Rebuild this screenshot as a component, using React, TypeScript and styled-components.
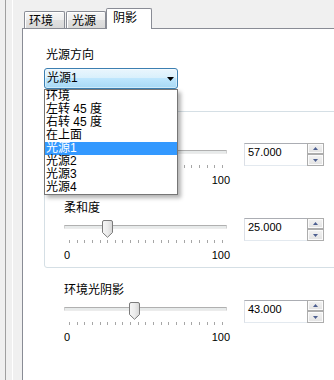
import React from "react";
import styled, { createGlobalStyle } from "styled-components";

const GlobalStyle = createGlobalStyle`
  html, body { margin: 0; padding: 0; background: #f0f0f0; }
  body {
    font-family: "Liberation Sans", "Noto Sans CJK SC", sans-serif;
    font-size: 12px;
    color: #000;
  }
  * { box-sizing: border-box; }
`;

const Page = styled.div`
  width: 334px;
  height: 380px;
  overflow: hidden;
  display: flex;
  padding-left: 5px;
  background: #f0f0f0;
`;

const OuterFrame = styled.div`
  flex: 1;
  display: flex;
  border-left: 1px solid #a0a0a0;
  padding-left: 6px;
  min-width: 0;
`;

const InnerFrame = styled.div`
  flex: 1;
  display: flex;
  flex-direction: column;
  border-left: 1px solid #ffffff;
  padding-left: 9px;
  min-width: 0;
`;

const TabBar = styled.div`
  height: 28px;
  flex: none;
  display: flex;
  align-items: flex-end;
  padding-left: 2px;
  position: relative;
  z-index: 1;
`;

const Tab = styled.div<{ $active?: boolean; $w: number; $pad: number; $gap?: number }>`
  width: ${(p) => p.$w}px;
  height: ${(p) => (p.$active ? 21 : 17)}px;
  margin-left: ${(p) => p.$gap ?? 0}px;
  margin-bottom: ${(p) => (p.$active ? -1 : 0)}px;
  padding: 2px 0 0 ${(p) => p.$pad}px;
  line-height: 14px;
  border: 1px solid #898c95;
  border-bottom: none;
  border-radius: 2px 2px 0 0;
  white-space: nowrap;
  background: ${(p) =>
    p.$active
      ? "#ffffff"
      : "linear-gradient(#f7f7f7 0%, #ededed 50%, #e1e1e1 51%, #d9d9d9 100%)"};
  box-shadow: ${(p) => (p.$active ? "none" : "inset 1px 1px 0 #ffffff")};
`;

const Panel = styled.div`
  flex: 1;
  background: #ffffff;
  border-top: 1px solid #898c95;
  border-left: 1px solid #898c95;
  margin-right: -30px;
  padding: 19px 0 0 21px;
  display: flex;
  flex-direction: column;
  align-items: flex-start;
`;

const SectionLabel = styled.div`
  line-height: 14px;
  padding-left: 2px;
  white-space: nowrap;
`;

const ComboWrap = styled.div`
  position: relative;
  margin-top: 6px;
  width: 134px;
  z-index: 5;
`;

const Combo = styled.div`
  height: 21px;
  border: 1px solid #3c7fb1;
  border-radius: 3px;
  background: linear-gradient(#eaf6fd 0%, #d9f0fc 47%, #bee6fd 50%, #a7d9f5 100%);
  box-shadow: inset 0 0 0 1px rgba(255, 255, 255, 0.45);
  display: flex;
  align-items: center;
  padding: 0 3px 0 2px;
  line-height: 19px;
`;

const ComboText = styled.span`
  flex: 1;
  white-space: nowrap;
`;

const ComboArrow = styled.svg`
  display: block;
  flex: none;
`;

const DropList = styled.div`
  position: absolute;
  top: 21px;
  left: 0;
  width: 134px;
  background: #ffffff;
  border: 1px solid #767676;
  box-shadow: 3px 3px 4px rgba(0, 0, 0, 0.3);
`;

const DropItem = styled.div<{ $selected?: boolean }>`
  height: 13px;
  line-height: 13px;
  padding-left: 1px;
  white-space: nowrap;
  background: ${(p) => (p.$selected ? "#3399ff" : "transparent")};
  color: ${(p) => (p.$selected ? "#ffffff" : "#000000")};
`;

const GroupBox = styled.div`
  align-self: stretch;
  margin: 22px 10px 0 0;
  border: 1px solid #d5dfe5;
  border-radius: 3px;
  padding: 14px 0 5px 19px;
  display: flex;
  flex-direction: column;
`;

const SliderRow = styled.div<{ $top?: number; $left?: number }>`
  display: flex;
  flex-direction: column;
  margin-top: ${(p) => p.$top ?? 0}px;
  margin-left: ${(p) => p.$left ?? 0}px;
`;

const RowLabel = styled.div`
  height: 14px;
  line-height: 14px;
  white-space: nowrap;
`;

const ControlLine = styled.div`
  display: flex;
  align-items: flex-start;
  margin-top: 3px;
`;

const SliderBox = styled.div`
  width: 163px;
  margin-top: 2px;
  display: flex;
  flex-direction: column;
`;

const TrackArea = styled.div`
  position: relative;
  height: 18px;
`;

const Track = styled.div`
  margin-top: 5px;
  height: 4px;
  background: #e7eaea;
  border-top: 1px solid #b0b0b0;
  border-left: 1px solid #d0d0d0;
  border-right: 1px solid #d0d0d0;
  border-bottom: 1px solid #ececec;
  border-radius: 1px;
`;

const Thumb = styled.svg`
  position: absolute;
  top: 0;
  display: block;
`;

const Ticks = styled.div`
  margin-top: 2px;
  height: 3px;
  display: flex;
  justify-content: space-between;
  padding: 0 4px 0 5px;
`;

const Tick = styled.span`
  width: 1px;
  height: 3px;
  background: #a6a6a6;
`;

const ScaleLabels = styled.div`
  width: 166px;
  margin-top: 6px;
  display: flex;
  justify-content: space-between;
  font-size: 11px;
  line-height: 13px;
`;

const SpinBox = styled.div`
  width: 80px;
  height: 23px;
  margin-left: 17px;
  display: flex;
`;

const SpinField = styled.div`
  flex: 1;
  border-top: 1px solid #abadb3;
  border-left: 1px solid #dbdfe6;
  border-bottom: 1px solid #e3e9ef;
  padding: 2px 0 0 3px;
  font-size: 11px;
  line-height: 13px;
  background: #ffffff;
`;

const SpinButtons = styled.div`
  width: 17px;
  display: flex;
  flex-direction: column;
`;

const SpinButton = styled.div<{ $h: number }>`
  height: ${(p) => p.$h}px;
  border: 1px solid #adadad;
  box-shadow: inset 0 0 0 1px #fbfbfb;
  background: linear-gradient(#f3f3f3, #e2e2e2);
  display: flex;
  align-items: center;
  justify-content: center;
`;

const Tri = styled.svg`
  display: block;
`;

const TICKS = Array.from({ length: 21 }, (_, i) => i);

function Slider({ label, value, top, left }: { label: string; value: number; top?: number; left?: number }) {
  const thumbLeft = value * 1.53 - 0.5;
  return (
    <SliderRow $top={top} $left={left}>
      <RowLabel>{label}</RowLabel>
      <ControlLine>
        <SliderBox>
          <TrackArea>
            <Track />
            <Thumb width="11" height="18" viewBox="0 0 11 18" style={{ left: thumbLeft }}>
              <defs>
                <linearGradient id={`tg${value}`} x1="0" y1="0" x2="1" y2="0">
                  <stop offset="0" stopColor="#f6f6f6" />
                  <stop offset="0.5" stopColor="#ececec" />
                  <stop offset="1" stopColor="#d6d6d6" />
                </linearGradient>
              </defs>
              <path
                d="M2 0.5 H9 Q10.5 0.5 10.5 2 V12.5 L5.5 17.3 L0.5 12.5 V2 Q0.5 0.5 2 0.5 Z"
                fill={`url(#tg${value})`}
                stroke="#7b7b7b"
                strokeWidth="1"
              />
            </Thumb>
          </TrackArea>
          <Ticks>
            {TICKS.map((t) => (
              <Tick key={t} />
            ))}
          </Ticks>
          <ScaleLabels>
            <span>0</span>
            <span>100</span>
          </ScaleLabels>
        </SliderBox>
        <SpinBox>
          <SpinField>{value.toFixed(3)}</SpinField>
          <SpinButtons>
            <SpinButton $h={11}>
              <Tri width="5" height="3" viewBox="0 0 5 3">
                <path d="M0 3 L2.5 0 L5 3 Z" fill="#4d5f90" />
              </Tri>
            </SpinButton>
            <SpinButton $h={12}>
              <Tri width="5" height="3" viewBox="0 0 5 3">
                <path d="M0 0 L5 0 L2.5 3 Z" fill="#4d5f90" />
              </Tri>
            </SpinButton>
          </SpinButtons>
        </SpinBox>
      </ControlLine>
    </SliderRow>
  );
}

const OPTIONS = ["环境", "左转 45 度", "右转 45 度", "在上面", "光源1", "光源2", "光源3", "光源4"];

export default function App() {
  return (
    <>
      <GlobalStyle />
      <Page>
        <OuterFrame>
          <InnerFrame>
            <TabBar>
              <Tab $w={41} $pad={4}>环境</Tab>
              <Tab $w={40} $pad={5} $gap={1}>光源</Tab>
              <Tab $w={46} $pad={6} $active>阴影</Tab>
            </TabBar>
            <Panel>
              <SectionLabel>光源方向</SectionLabel>
              <ComboWrap>
                <Combo>
                  <ComboText>光源1</ComboText>
                  <ComboArrow width="7" height="4" viewBox="0 0 7 4">
                    <path d="M0 0 H7 L3.5 4 Z" fill="#000" />
                  </ComboArrow>
                </Combo>
                <DropList>
                  {OPTIONS.map((o) => (
                    <DropItem key={o} $selected={o === "光源1"}>
                      {o}
                    </DropItem>
                  ))}
                </DropList>
              </ComboWrap>
              <GroupBox>
                <Slider label="" value={57} />
                <Slider label="柔和度" value={25} top={14} />
              </GroupBox>
              <Slider label="环境光阴影" value={43} top={15} left={20} />
            </Panel>
          </InnerFrame>
        </OuterFrame>
      </Page>
    </>
  );
}
